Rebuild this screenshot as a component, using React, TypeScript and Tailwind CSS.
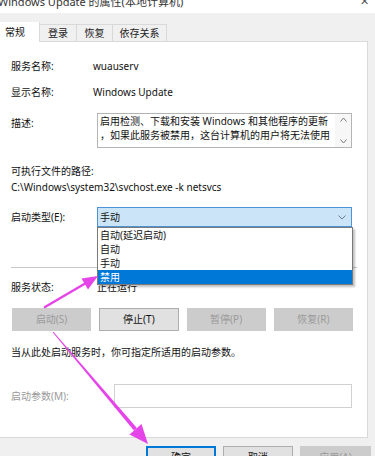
import React from 'react';

const font = { fontFamily: '"Noto Sans", "Noto Sans CJK SC", sans-serif' };

const tabs = [
  { name: '登录', w: 'w-[37px]' },
  { name: '恢复', w: 'w-[36px]' },
  { name: '依存关系', w: 'w-[54px]' },
];

const options = ['自动(延迟启动)', '自动', '手动', '禁用'];

const buttons = [
  { label: '启动(S)', enabled: false },
  { label: '停止(T)', enabled: true },
  { label: '暂停(P)', enabled: false },
  { label: '恢复(R)', enabled: false },
];

const Arrows: React.FC = () => (
  <svg className="absolute inset-0 pointer-events-none" width="375" height="456" viewBox="0 0 375 456">
    <line x1="45" y1="307" x2="86" y2="283" stroke="#e545e8" strokeWidth="2.5" strokeLinecap="round" />
    <polygon points="98,276 88,289.5 81.5,278.5" fill="#e545e8" />
    <polygon points="52.6,332.3 53.4,331.7 136.9,428 133.9,430.6" fill="#e545e8" />
    <polygon points="148,444 141.5,424 129.5,434.5" fill="#e545e8" />
  </svg>
);

export default function App() {
  return (
    <div className="relative w-[375px] h-[456px] overflow-hidden bg-[#f0f0f0] text-[10px] text-[#111]" style={font}>
      {/* title bar */}
      <div className="h-[13px] bg-white flex justify-between overflow-hidden">
        <span className="block -mt-[6px] -ml-[2px] leading-[16px] text-[11px] text-[#333] whitespace-nowrap">
          Windows Update 的属性(本地计算机)
        </span>
        <span className="block -mt-[7px] mr-[6px] leading-[16px] text-[11px] text-[#555]">✕</span>
      </div>

      {/* tabs */}
      <div className="mt-[9px] flex items-end h-[19px]">
        <div className="relative z-10 -mb-px w-[40px] h-[20px] bg-white border-r border-[#d9d9d9] flex items-center pl-[5px] leading-none">
          常规
        </div>
        {tabs.map(t => (
          <div
            key={t.name}
            className={`${t.w} h-[17px] border-t border-r border-[#d9d9d9] flex items-center justify-center leading-none text-[#222]`}
          >
            {t.name}
          </div>
        ))}
      </div>

      {/* panel */}
      <div className="relative -ml-px w-[369px] h-[397px] bg-white border border-[#d9d9d9] pl-[11px]">
        <div className="mt-[16px] flex h-[16px] items-center">
          <span className="w-[82px]">服务名称:</span>
          <span>wuauserv</span>
        </div>
        <div className="mt-[10px] flex h-[16px] items-center">
          <span className="w-[82px]">显示名称:</span>
          <span>Windows Update</span>
        </div>
        <div className="mt-[13px] flex items-start">
          <span className="w-[82px] mt-[2px] leading-[16px]">描述:</span>
          <div className="ml-[4px] w-[255px] h-[35px] border border-[#b4b4b4] flex">
            <div className="flex-1 pl-[2px] leading-[14px] text-[10px]">
              <div className="whitespace-nowrap">启用检测、下载和安装 Windows 和其他程序的更新</div>
              <div className="whitespace-nowrap">，如果此服务被禁用，这台计算机的用户将无法使用</div>
            </div>
            <div className="w-[16px] bg-[#f7f7f7] flex flex-col items-center justify-between text-[#888] text-[8px] leading-none py-[3px]">
              <svg width="7" height="5" viewBox="0 0 7 5"><path d="M0.5 4.5 L3.5 1 L6.5 4.5" fill="none" stroke="#777" /></svg>
              <svg width="7" height="5" viewBox="0 0 7 5"><path d="M0.5 0.5 L3.5 4 L6.5 0.5" fill="none" stroke="#777" /></svg>
            </div>
          </div>
        </div>
        <div className="mt-[15px] h-[16px] flex items-center">可执行文件的路径:</div>
        <div className="h-[16px] flex items-center">C:\Windows\system32\svchost.exe -k netsvcs</div>
        <div className="mt-[12px] flex items-center">
          <span className="w-[86px]">启动类型(E):</span>
          <div className="w-[255px] h-[20px] bg-[#cce4f7] border border-[#4d94d6] flex items-center justify-between pl-[2px] pr-[5px]">
            <span>手动</span>
            <svg width="8" height="5" viewBox="0 0 8 5"><path d="M0.5 0.5 L4 4 L7.5 0.5" fill="none" stroke="#6d7c8c" /></svg>
          </div>
        </div>
        <div className="mt-[40px] mr-[10px] h-px bg-[#c8c8c8]" />
        <div className="mt-[11px] flex h-[16px] items-center">
          <span className="w-[86px]">服务状态:</span>
          <span>正在运行</span>
        </div>
        <div className="mt-[13px] grid grid-cols-4 gap-[8px] w-[341px] ml-px">
          {buttons.map(b => (
            <div
              key={b.label}
              className={
                b.enabled
                  ? 'h-[23px] bg-[#e1e1e1] border border-[#adadad] flex items-center justify-center'
                  : 'h-[23px] bg-[#cccccc] flex items-center justify-center text-[#9a9a9a]'
              }
            >
              {b.label}
            </div>
          ))}
        </div>
        <div className="mt-[13px] h-[16px] flex items-center">当从此处启动服务时，你可指定所适用的启动参数。</div>
        <div className="mt-[24px] flex items-center">
          <span className="w-[103px] text-[#9a9a9a]">启动参数(M):</span>
          <div className="w-[238px] h-[24px] border border-[#d0d0d0] bg-white" />
        </div>

        {/* open dropdown list */}
        <div className="absolute left-[97px] top-[185px] w-[256px] border border-[#7a7a7a] bg-white shadow-[2px_2px_2px_rgba(0,0,0,0.25)]">
          {options.map(o => (
            <div
              key={o}
              className={
                o === '禁用'
                  ? 'h-[14px] leading-[14px] pl-[2px] bg-[#0078d7] text-white'
                  : 'h-[14px] leading-[14px] pl-[2px]'
              }
            >
              {o}
            </div>
          ))}
        </div>
      </div>

      {/* dialog buttons */}
      <div className="mt-[8px] flex justify-end gap-[7px] pr-[4px]">
        <div className="w-[70px] h-[23px] bg-[#e1e1e1] border-2 border-[#0078d7] flex items-center justify-center">确定</div>
        <div className="w-[70px] h-[23px] bg-[#e1e1e1] border border-[#adadad] flex items-center justify-center">取消</div>
        <div className="w-[71px] h-[23px] bg-[#cccccc] flex items-center justify-center text-[#9a9a9a]">应用(A)</div>
      </div>

      <Arrows />
    </div>
  );
}
